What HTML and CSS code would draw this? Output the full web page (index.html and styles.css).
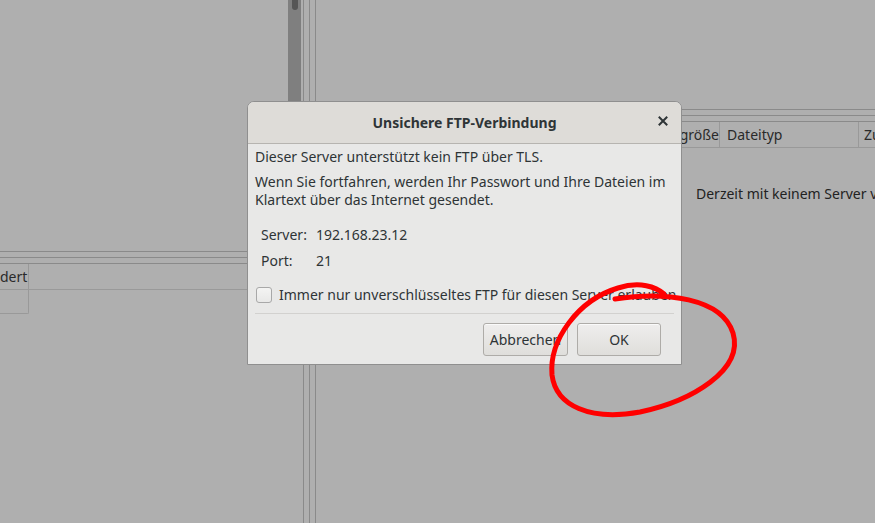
FILE: index.html
```html
<!DOCTYPE html>
<html lang="de">
<head>
<meta charset="utf-8">
<title>Unsichere FTP-Verbindung</title>
<link rel="stylesheet" href="styles.css">
</head>
<body>
<div class="app">
  <div class="left">
    <div class="left-top">
      <div class="left-view"></div>
      <div class="scrollbar"><div class="thumb"></div></div>
    </div>
    <div class="hsplit"><span></span></div>
    <div class="left-bottom">
      <div class="lhead"><div class="lcell">dert</div><div class="lrest"></div></div>
      <div class="lrow"><div class="lcell sel"></div></div>
    </div>
  </div>
  <div class="vsplit"><span></span></div>
  <div class="right">
    <div class="right-top"></div>
    <div class="hsplit"><span></span></div>
    <div class="rhead">
      <div class="rcol c1">Dateigröße</div>
      <div class="rcol c2">Dateityp</div>
      <div class="rcol c3">Zuletzt geändert</div>
    </div>
    <div class="rmsg">Derzeit mit keinem Server verbunden</div>
  </div>
</div>

<div class="dialog">
  <div class="titlebar">
    <span class="title">Unsichere FTP-Verbindung</span>
    <svg class="close" width="10" height="10" viewBox="0 0 10 10" aria-label="Schließen"><path d="M1.5 1.5 L8.5 8.5 M8.5 1.5 L1.5 8.5" stroke="#2e3436" stroke-width="2" stroke-linecap="square"/></svg>
  </div>
  <div class="body">
    <p class="p1">Dieser Server unterstützt kein FTP über TLS.</p>
    <p class="p2">Wenn Sie fortfahren, werden Ihr Passwort und Ihre Dateien im Klartext über das Internet gesendet.</p>
    <div class="info">
      <div class="irow"><span class="lab">Server:</span><span>192.168.23.12</span></div>
      <div class="irow"><span class="lab">Port:</span><span>21</span></div>
    </div>
    <label class="check"><span class="box"></span><span>Immer nur unverschlüsseltes FTP für diesen Server erlauben</span></label>
    <div class="sep"></div>
    <div class="buttons">
      <button class="btn b1">Abbrechen</button>
      <button class="btn b2">OK</button>
    </div>
  </div>
</div>

<svg class="mark" width="875" height="523" viewBox="0 0 875 523">
  <path d="M 615 299 C 665 291, 722 298, 733 333 C 744 370, 692 401, 640 412 C 590 421, 556 406, 552 375 C 549 340, 578 300, 618 288 C 640 281, 656 287, 664 294" fill="none" stroke="#ff0000" stroke-width="5" stroke-linecap="round"/>
</svg>
</body>
</html>
```

FILE: styles.css
```css
html, body {
  margin: 0;
  padding: 0;
}
body {
  width: 875px;
  height: 523px;
  overflow: hidden;
  background: #afafaf;
  font-family: "Noto Sans", "DejaVu Sans", sans-serif;
  font-size: 14px;
  color: #2e3436;
  position: relative;
}
.app {
  display: flex;
  height: 523px;
}
.left {
  width: 303px;
  flex: none;
  display: flex;
  flex-direction: column;
}
.left-top {
  height: 251px;
  display: flex;
}
.left-view {
  width: 288px;
}
.scrollbar {
  width: 13px;
  background: #7f7f7f;
  position: relative;
  overflow: hidden;
}
.thumb {
  position: absolute;
  left: 4px;
  top: -4px;
  width: 6px;
  height: 14px;
  border-radius: 3px;
  background: #555555;
}
.hsplit {
  height: 13px;
  flex: none;
  box-sizing: border-box;
  border-top: 1px solid #8a8a8a;
  border-bottom: 1px solid #8a8a8a;
  display: flex;
  align-items: center;
}
.hsplit span {
  display: block;
  width: 100%;
  height: 1px;
  background: #8a8a8a;
}
.left-bottom {
  flex: 1;
}
.lhead {
  display: flex;
  height: 26px;
  border-bottom: 1px solid #999;
  box-sizing: border-box;
}
.lcell {
  width: 29px;
  box-sizing: border-box;
  border-right: 1px solid #999;
  color: #2a2a2a;
  text-align: right;
  line-height: 25px;
  overflow: hidden;
  white-space: nowrap;
  padding-right: 4px;
}
.lrow {
  height: 24px;
  display: flex;
}
.lrow .sel {
  border-bottom: 1px solid #999;
  border-bottom-right-radius: 2px;
}
.vsplit {
  width: 13px;
  flex: none;
  box-sizing: border-box;
  border-left: 1px solid #8a8a8a;
  border-right: 1px solid #8a8a8a;
  display: flex;
  justify-content: center;
}
.vsplit span {
  display: block;
  width: 1px;
  height: 100%;
  background: #8a8a8a;
}
.right {
  flex: 1;
  min-width: 0;
  display: flex;
  flex-direction: column;
  overflow: hidden;
}
.right-top {
  height: 109px;
  flex: none;
}
.rhead {
  display: flex;
  height: 26px;
  flex: none;
  box-sizing: border-box;
  border-bottom: 1px solid #999;
  white-space: nowrap;
}
.rcol {
  flex: none;
  line-height: 25px;
  color: #2a2a2a;
  overflow: hidden;
  box-sizing: border-box;
}
.c1 {
  width: 404px;
  border-right: 1px solid #999;
  text-align: right;
  padding-right: 0;
}
.c2 {
  width: 139px;
  padding-left: 7px;
  border-right: 1px solid #999;
}
.c3 {
  padding-left: 5px;
}
.rmsg {
  margin-top: 36px;
  padding-left: 380px;
  color: #222;
  white-space: nowrap;
}

.dialog {
  position: absolute;
  left: 247px;
  top: 101px;
  width: 435px;
  height: 264px;
  box-sizing: border-box;
  border: 1px solid #8f8f8f;
  border-radius: 7px 7px 0 0;
  background: #e8e8e7;
  display: flex;
  flex-direction: column;
}
.titlebar {
  height: 41px;
  flex: none;
  background: #dedcd8;
  border-bottom: 1px solid #b6b4b0;
  border-radius: 6px 6px 0 0;
  display: flex;
  align-items: center;
  justify-content: center;
  position: relative;
}
.title {
  font-weight: bold;
  color: #2e3436;
  font-size: 14px;
}
.close {
  position: absolute;
  right: 13px;
  top: 14px;
}
.body {
  padding: 3px 7px 0 7px;
  display: flex;
  flex-direction: column;
  flex: 1;
}
.body p {
  margin: 0;
  line-height: 19px;
}
.body .p2 {
  margin-top: 7px;
  line-height: 18px;
}
.info {
  margin-top: 16px;
  padding-left: 6px;
  display: flex;
  flex-direction: column;
  gap: 7px;
}
.irow {
  display: flex;
  line-height: 19px;
}
.lab {
  width: 55px;
}
.check {
  margin-top: 15px;
  display: flex;
  align-items: center;
  gap: 7px;
  white-space: nowrap;
  padding-left: 1px;
}
.box {
  width: 14px;
  height: 14px;
  border: 1px solid #a8a8a8;
  border-radius: 3px;
  background: linear-gradient(#f4f4f3, #e8e8e7);
  flex: none;
}
.sep {
  margin-top: 9px;
  height: 1px;
  background: #d2d1cf;
}
.buttons {
  display: flex;
  justify-content: flex-end;
  gap: 9px;
  padding-top: 9px;
  padding-right: 13px;
}
.btn {
  height: 33px;
  font-family: "Noto Sans", "DejaVu Sans", sans-serif;
  font-size: 14px;
  color: #2e3436;
  border: 1px solid #aeaca8;
  border-radius: 3px;
  background: linear-gradient(#efeeed, #dfdedb);
  box-shadow: inset 0 1px #fafafa;
  padding: 0;
}
.b1 { width: 85px; }
.b2 { width: 84px; }

.mark {
  position: absolute;
  left: 0;
  top: 0;
  pointer-events: none;
}
```
